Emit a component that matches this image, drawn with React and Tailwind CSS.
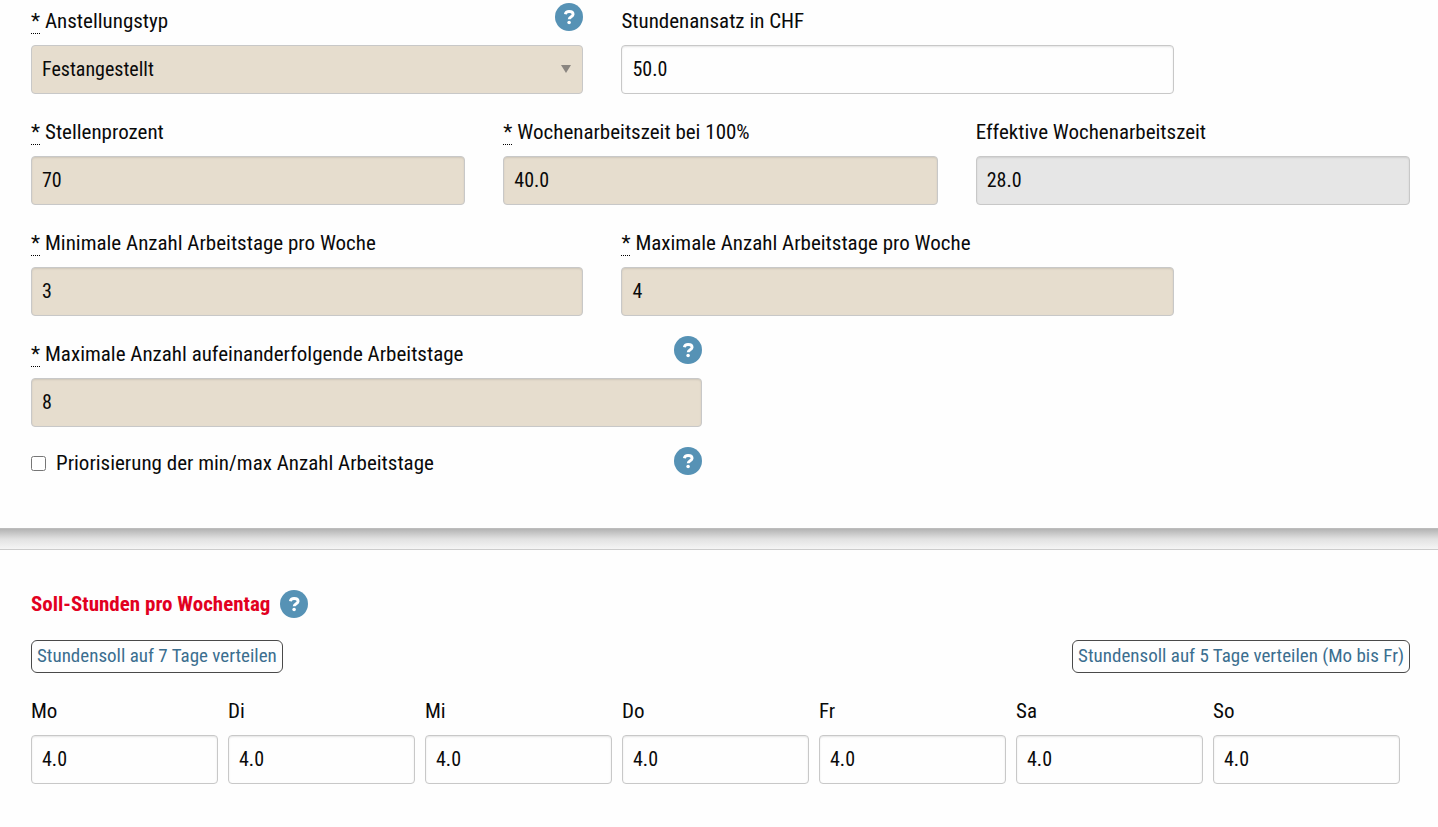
import { useState } from 'react';
import clsx from 'clsx';

const WEEKDAYS = ['Mo', 'Di', 'Mi', 'Do', 'Fr', 'Sa', 'So'];

const boxClass =
  'block h-[49px] w-full appearance-none rounded-[4px] border border-[#c8c8c8] px-2.5 pb-0.5 text-[20px] leading-6 text-[#0a0a0a] focus:outline-none focus:border-[#5692b5]';

function HelpButton() {
  return (
    <button type="button" aria-label="Hilfe" className="shrink-0 cursor-pointer">
      <svg viewBox="0 0 28 28" className="h-7 w-7" fill="none" aria-hidden>
        <circle cx="14" cy="14" r="14" fill="#5692b5" />
        <path
          d="M10.4 11.2c.3-1.9 1.6-2.7 3.7-2.7 2.5 0 4 1 4 2.8 0 2.5-3.8 2.3-3.9 5"
          stroke="#fff"
          strokeWidth="2.9"
        />
        <circle cx="14.1" cy="19.5" r="1.8" fill="#fff" />
      </svg>
    </button>
  );
}

function Required() {
  return (
    <abbr
      title="erforderlich"
      className="mr-[5px] inline-block h-[25px] w-[9px] border-b border-dotted border-black no-underline"
    >
      *
    </abbr>
  );
}

function Field({ id, label, required, help, className, children }) {
  return (
    <div className={className}>
      <div className="mb-1.5 flex h-9 items-start justify-between">
        <label htmlFor={id} className="pt-1.5 leading-6 whitespace-nowrap">
          {required ? <Required /> : null}
          {label}
        </label>
        {help ? <HelpButton /> : null}
      </div>
      {children}
    </div>
  );
}

function TextInput({ id, value, required, readOnly }) {
  return (
    <input
      id={id}
      type="text"
      defaultValue={value}
      required={required}
      readOnly={readOnly}
      className={clsx(
        boxClass,
        'shadow-[inset_0_1px_2px_rgba(10,10,10,0.1)]',
        required && 'bg-[#e6ddce]',
        readOnly && 'bg-[#e6e6e6]',
        !required && !readOnly && 'bg-[#fefefe]'
      )}
    />
  );
}

function OutlineButton({ children, onClick }) {
  return (
    <button
      type="button"
      onClick={onClick}
      className="h-[33px] cursor-pointer rounded-md border border-[#4a4a4a] px-[5px] pb-0.5 text-[19px] leading-6 whitespace-nowrap text-[#3b6e8f]"
    >
      {children}
    </button>
  );
}

export default function App() {
  const [hours, setHours] = useState(WEEKDAYS.map(() => '4.0'));

  const distribute = (days) => {
    const perDay = (28 / days).toFixed(1);
    setHours(WEEKDAYS.map((_, i) => (i < days ? perDay : '0.0')));
  };

  return (
    <form className="min-h-screen overflow-x-hidden bg-[#fefefe] font-['Roboto_Condensed','Roboto',sans-serif] text-[21px] text-[#0a0a0a]">
      <section className="relative bg-[#fefefe] pt-[3px] pr-7 pb-[53px] pl-[31px]">
        <div className="grid grid-cols-12 gap-x-[38px] gap-y-5">
          <Field id="type" label="Anstellungstyp" required help className="col-span-5">
            <div className="relative">
              <select id="type" required className={clsx(boxClass, 'bg-[#e6ddce]')}>
                <option>Festangestellt</option>
              </select>
              <svg
                viewBox="0 0 10 8"
                className="pointer-events-none absolute top-5 right-3 h-2 w-2.5 fill-[#8a8580]"
                aria-hidden
              >
                <path d="M0 0h10L5 8z" />
              </svg>
            </div>
          </Field>
          <Field id="rate" label="Stundenansatz in CHF" className="col-span-5">
            <TextInput id="rate" value="50.0" />
          </Field>

          <Field id="percent" label="Stellenprozent" required className="col-span-4 col-start-1">
            <TextInput id="percent" value="70" required />
          </Field>
          <Field id="full" label="Wochenarbeitszeit bei 100%" required className="col-span-4">
            <TextInput id="full" value="40.0" required />
          </Field>
          <Field id="effective" label="Effektive Wochenarbeitszeit" className="col-span-4">
            <TextInput id="effective" value="28.0" readOnly />
          </Field>

          <Field id="min" label="Minimale Anzahl Arbeitstage pro Woche" required className="col-span-5">
            <TextInput id="min" value="3" required />
          </Field>
          <Field id="max" label="Maximale Anzahl Arbeitstage pro Woche" required className="col-span-5">
            <TextInput id="max" value="4" required />
          </Field>

          <Field
            id="consecutive"
            label="Maximale Anzahl aufeinanderfolgende Arbeitstage"
            required
            help
            className="col-span-6 col-start-1"
          >
            <TextInput id="consecutive" value="8" required />
          </Field>

          <div className="col-span-6 col-start-1 flex items-start justify-between">
            <label className="flex items-center pt-1 leading-6">
              <input type="checkbox" className="mr-2.5 h-[15px] w-[15px]" />
              Priorisierung der min/max Anzahl Arbeitstage
            </label>
            <HelpButton />
          </div>
        </div>
      </section>

      <div className="h-[21px] border-t border-[#bcbcbc] bg-linear-to-b from-[#b4b4b4] via-[#e2e2e2] to-[#f5f5f5]" />

      <section className="border-t border-[#cccccc] pt-10 pr-7 pb-10 pl-[31px]">
        <div className="mb-[22px] flex items-center gap-2.5">
          <h2 className="text-[21px] leading-7 font-bold text-[#e2001f]">Soll-Stunden pro Wochentag</h2>
          <HelpButton />
        </div>
        <div className="mb-5 flex items-center justify-between">
          <OutlineButton onClick={() => distribute(7)}>Stundensoll auf 7 Tage verteilen</OutlineButton>
          <OutlineButton onClick={() => distribute(5)}>Stundensoll auf 5 Tage verteilen (Mo bis Fr)</OutlineButton>
        </div>
        <div className="mr-2.5 grid grid-cols-7 gap-2.5">
          {WEEKDAYS.map((day, i) => (
            <div key={day}>
              <label htmlFor={`day-${day}`} className="mb-1.5 block h-9 pt-1.5 leading-6">
                {day}
              </label>
              <input
                id={`day-${day}`}
                type="text"
                value={hours[i]}
                onChange={(e) => setHours(hours.map((h, j) => (j === i ? e.target.value : h)))}
                className={clsx(boxClass, 'bg-[#fefefe] shadow-[inset_0_1px_2px_rgba(10,10,10,0.1)]')}
              />
            </div>
          ))}
        </div>
      </section>
    </form>
  );
}
